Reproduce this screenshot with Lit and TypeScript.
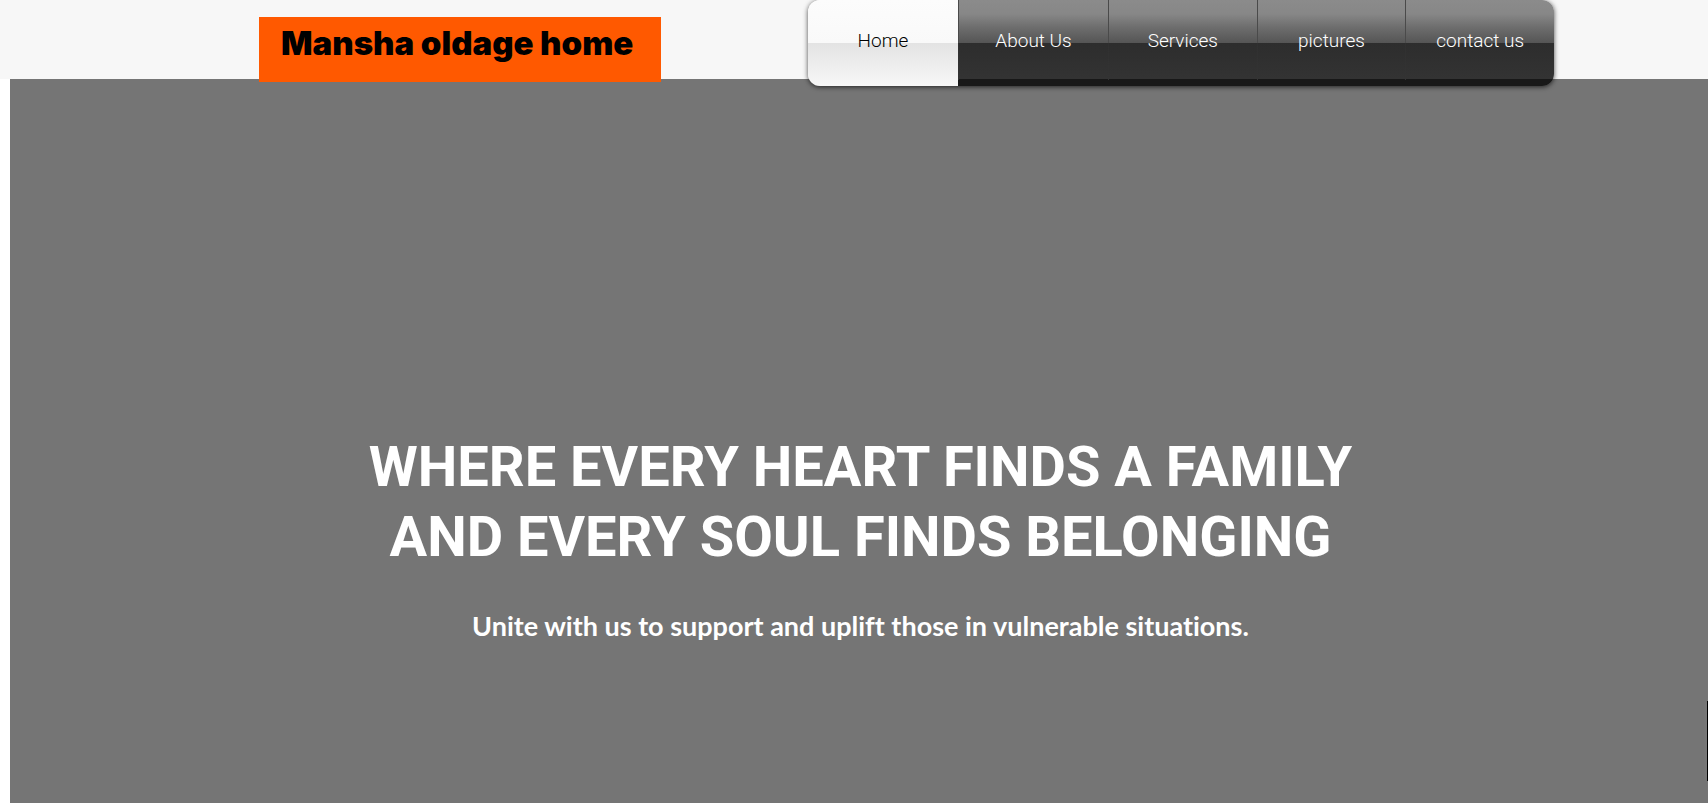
import { LitElement, html, css } from "lit";
import { customElement, state } from "lit/decorators.js";
import { classMap } from "lit/directives/class-map.js";

@customElement("app-root")
export class AppRoot extends LitElement {
  @state() private active = "Home";

  private links = ["Home", "About Us", "Services", "pictures", "contact us"];

  static styles = css`
    :host {
      display: flex;
      flex-direction: column;
      min-height: 100vh;
      background: #ffffff;
      font-family: Roboto, "Liberation Sans", sans-serif;
    }
    * {
      box-sizing: border-box;
    }
    .header {
      position: relative;
      z-index: 1;
      height: 79px;
      background: #f7f7f7;
    }
    .header-inner {
      display: flex;
      justify-content: space-between;
      align-items: flex-start;
      max-width: 1400px;
      margin: 0 auto;
      padding-left: 105px;
    }
    .logo {
      width: 402px;
      height: 65px;
      margin-top: 17px;
      padding: 0 22px;
      background: #ff5900;
      color: #000000;
      font-family: Inter, Roboto, sans-serif;
      font-size: 33px;
      font-weight: 900;
      line-height: 52px;
      text-decoration: none;
      white-space: nowrap;
    }
    .nav {
      flex: 0 0 746px;
      display: grid;
      grid-template-columns: 150px 150px repeat(3, 1fr);
      height: 86px;
      overflow: hidden;
      border-radius: 12px;
      box-shadow: 0 1px 5px rgba(0, 0, 0, 0.7);
    }
    .link {
      border-style: solid;
      border-width: 0 0 0 1px;
      border-image: linear-gradient(#4a4a4a 0, #4a4a4a 43px, #303030 43px, #333333 79px, #181818 79px) 1;
      background: linear-gradient(
        #8b8b8b 0,
        #878787 14px,
        #6c6c6c 28px,
        #555555 43px,
        #2d2d2d 43px,
        #333333 79px,
        #181818 79px
      );
      color: #ffffff;
      font-size: 19px;
      font-weight: 300;
      line-height: 82px;
      text-align: center;
      text-decoration: none;
      white-space: nowrap;
    }
    .link.active {
      border: 0;
      background: linear-gradient(#fcfcfc 0, #f9f9f9 43px, #e3e3e3 43px, #f7f7f7 86px);
      color: #000000;
    }
    .hero {
      flex: 1;
      margin-left: 10px;
      padding: 353px 24px 24px 27px;
      background: #757575;
      color: #ffffff;
      text-align: center;
    }
    .title {
      margin: 0;
      font-size: 56px;
      font-weight: 700;
      line-height: 70px;
    }
    .line {
      display: block;
    }
    .tagline {
      margin: 34px 0 0;
      font-family: Lato, sans-serif;
      font-size: 27px;
      font-weight: 700;
      font-variant-ligatures: none;
      line-height: 40px;
    }
    .side-tab {
      position: fixed;
      right: 0;
      bottom: 22px;
      width: 1px;
      height: 80px;
      background: #000000;
      box-shadow: 0 0 4px rgba(255, 255, 255, 0.15);
    }
  `;

  render() {
    return html`
      <header class="header">
        <div class="header-inner">
          <a class="logo" href="#home">Mansha oldage home</a>
          <nav class="nav" aria-label="Main">
            ${this.links.map(
              (label) => html`<a
                class=${classMap({ link: true, active: label === this.active })}
                href="#${label.toLowerCase().replace(" ", "-")}"
                @click=${() => (this.active = label)}
                >${label}</a
              >`
            )}
          </nav>
        </div>
      </header>
      <main class="hero">
        <h1 class="title">
          <span class="line">WHERE EVERY HEART FINDS A FAMILY</span>
          <span class="line">AND EVERY SOUL FINDS BELONGING</span>
        </h1>
        <p class="tagline">Unite with us to support and uplift those in vulnerable situations.</p>
      </main>
      <div class="side-tab"></div>
    `;
  }
}
